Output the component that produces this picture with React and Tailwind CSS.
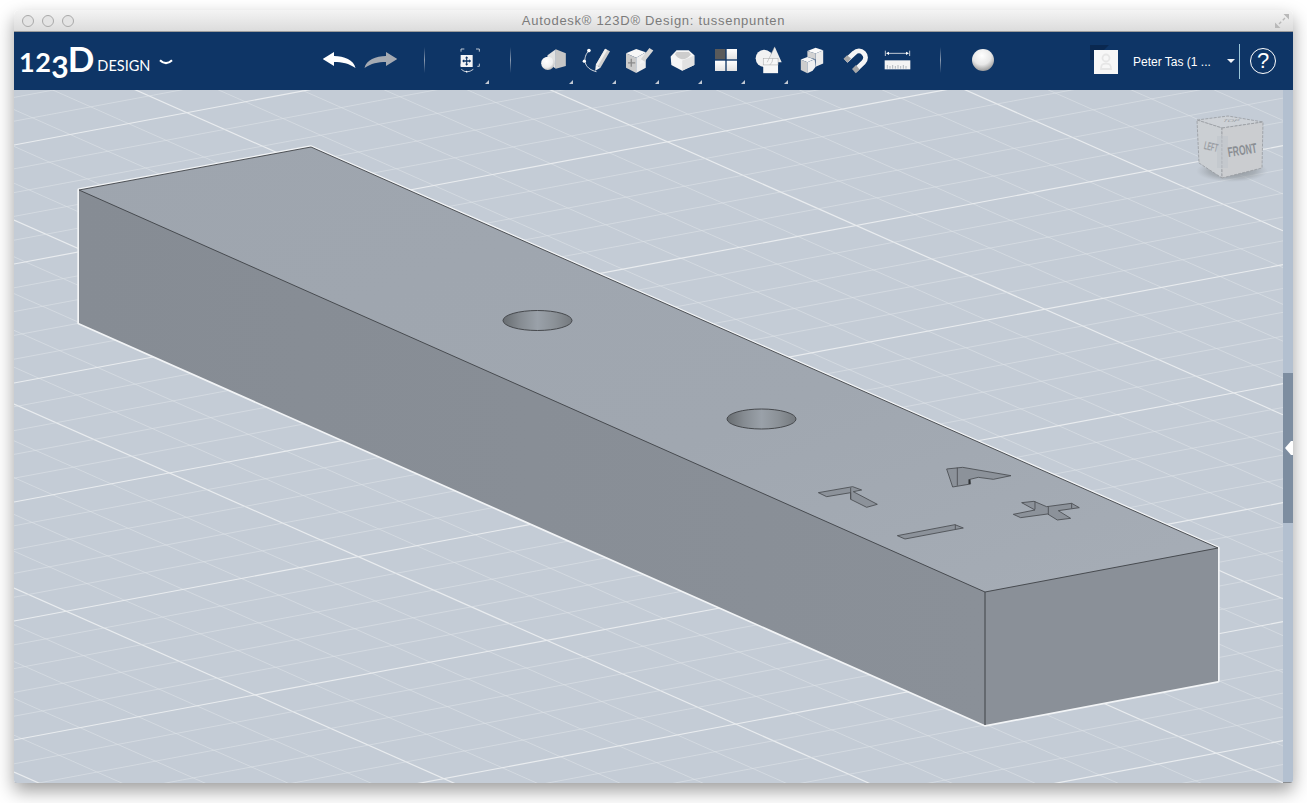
import React from 'react';

// grid lattice of the 3D floor: orthographic view, so every line in a family is parallel
const LEFT = 14;
const RIGHT = 1283;
const SPAN = RIGHT - LEFT;

function buildLines(base, step, slope, min, max) {
  const lines = [];
  for (let k = -60; k <= 60; k++) {
    const c = base + step * k;
    if (c < min || c > max) continue;
    lines.push({ id: k, y1: c, y2: c + slope * SPAN, major: k % 5 === 0 });
  }
  return lines;
}

const downLines = buildLines(588, 36.8, 0.4435, -480, 790);
const upLines = buildLines(145, 23.8, -0.187, 85, 1025);
const gridLines = [...downLines.map(l => ({ ...l, key: 'd' + l.id })), ...upLines.map(l => ({ ...l, key: 'u' + l.id }))];

function Scene() {
  return (
    <svg viewBox="14 90 1269 693" className="block w-[1269px] h-[693px] bg-[#c4ccd6]">
      <defs>
        <linearGradient id="topFace" x1="0" y1="0" x2="1" y2="1">
          <stop offset="0" stopColor="#9ea5ae" />
          <stop offset="0.6" stopColor="#a0a7b0" />
          <stop offset="1" stopColor="#a6adb6" />
        </linearGradient>
        <linearGradient id="leftFace" x1="0" y1="0" x2="1" y2="0">
          <stop offset="0" stopColor="#868c94" />
          <stop offset="1" stopColor="#8a9098" />
        </linearGradient>
        <linearGradient id="holeWall" x1="0" y1="0" x2="1" y2="0">
          <stop offset="0" stopColor="#686d71" />
          <stop offset="0.25" stopColor="#868c92" />
          <stop offset="0.5" stopColor="#9aa1a9" />
          <stop offset="0.75" stopColor="#8b9197" />
          <stop offset="1" stopColor="#74797e" />
        </linearGradient>
        <radialGradient id="cubeShadow" cx="0.5" cy="0.5" r="0.5">
          <stop offset="0" stopColor="#7d8388" stopOpacity="0.85" />
          <stop offset="0.65" stopColor="#8d9398" stopOpacity="0.5" />
          <stop offset="1" stopColor="#a0a6ad" stopOpacity="0" />
        </radialGradient>
      </defs>

      {gridLines.map(l => (
        <line
          key={l.key}
          x1={LEFT}
          y1={l.y1}
          x2={RIGHT}
          y2={l.y2}
          stroke={l.major ? '#e9ecef' : '#dde2e7'}
          strokeWidth={l.major ? 1.2 : 0.6}
        />
      ))}

      {/* block */}
      <polygon points="79,323 79,190 311,147 1218,548 1218,681 985,725" fill="#8a9098" stroke="#f2f4f6" strokeWidth="3.4" strokeLinejoin="round" />
      <polygon points="79,190 311,147 1218,548 985,592" fill="url(#topFace)" />
      <polygon points="79,190 985,592 985,725 79,323" fill="url(#leftFace)" />
      <polygon points="985,592 1218,548 1218,681 985,725" fill="#8a9098" />
      <polyline points="79,190 311,147 1218,548 985,592 79,190" fill="none" stroke="#3f4347" strokeWidth="0.9" />
      <line x1="985" y1="592" x2="985" y2="725" stroke="#3f4347" strokeWidth="1" />

      {/* holes */}
      <ellipse cx="537.5" cy="320.5" rx="34.5" ry="10" fill="url(#holeWall)" stroke="#46494d" strokeWidth="1" />
      <ellipse cx="761.5" cy="419" rx="34.5" ry="10" fill="url(#holeWall)" stroke="#46494d" strokeWidth="1" />

      {/* cut out symbols, drawn in crop coordinates */}
      <g transform="translate(780 440) scale(0.3333)" fill="#8c929a" stroke="#4a4e52" strokeWidth="2.6" strokeLinejoin="round">
        <polygon points="115,158 218,140 245,150 220,155 292,193 260,202 212,178 212,158 140,170" />
        <line x1="212" y1="143" x2="212" y2="178" />
        <polygon points="500,87 548,82 693,107 640,118 595,112 570,118 572,132 518,141" />
        <line x1="532" y1="83" x2="532" y2="137" />
        <line x1="568" y1="118" x2="568" y2="132" strokeWidth="5" stroke="#2e3134" />
        <polygon points="352,287 525,254 550,264 375,297" />
        <line x1="526" y1="254" x2="526" y2="268" />
        <polygon points="725,188 762,184 800,200 875,190 898,203 835,212 872,235 832,240 803,222 722,233 700,223 765,210" />
        <line x1="765" y1="184" x2="765" y2="208" />
        <line x1="805" y1="200" x2="805" y2="224" />
        <line x1="875" y1="190" x2="875" y2="205" />
      </g>

      {/* view cube */}
      <ellipse cx="1232" cy="171" rx="36" ry="11" fill="url(#cubeShadow)" />
      <g stroke="#979ba0" strokeWidth="0.8" strokeDasharray="3 1.2">
        <polygon points="1197,120 1228,116 1263,122 1222,128" fill="#cdd1d6" />
        <polygon points="1197,120 1222,128 1222,178 1199,163" fill="#cbcfd3" />
        <polygon points="1222,128 1263,122 1262,168 1222,178" fill="#cbcdd0" />
      </g>
      <rect x="1217" y="136" width="11" height="32" fill="#c0c5cb" opacity="0.6" />
      <text transform="translate(1203.500 149) rotate(12) scale(0.5 1.05)" fontFamily="'Liberation Sans', sans-serif" fontSize="11" fontWeight="700" fill="#9a9ea3">LEFT</text>
      <text transform="translate(1228.500 157) rotate(-9) scale(0.68 1.1)" fontFamily="'Liberation Sans', sans-serif" fontSize="12.500" fontWeight="700" fill="#8a8e93">FRONT</text>
      <text transform="translate(1222 122) skewX(-40) scale(1 0.5)" fontFamily="'Liberation Sans', sans-serif" fontSize="8" fill="#9a9ea3">TOP</text>
    </svg>
  );
}

function CornerBadge() {
  return <span className="absolute right-[2px] bottom-[6px] w-0 h-0 border-b-[4px] border-l-[4px] border-b-[#c2c9d3] border-l-transparent" />;
}

function Slot({ badge, children }) {
  return (
    <div className="relative w-[43px] h-full flex items-center justify-center shrink-0">
      <div className="-mt-[2px] flex">{children}</div>
      {badge && <CornerBadge />}
    </div>
  );
}

function ToolDivider({ className }) {
  return <div className={`w-px h-[26px] shrink-0 -mt-[2px] bg-linear-to-b from-transparent via-[#8b9bb0] to-transparent ${className}`} />;
}

function FitIcon() {
  return (
    <svg viewBox="55 45 66 84" className="w-[22px] h-[28px]">
      <g fill="none" stroke="#e8ebef" strokeWidth="2.4">
        <path d="M61 62V54H71M106 54H116V62M61 98V106M116 98V106H110" />
        <path d="M62 115Q78 130 98 115" />
      </g>
      <circle cx="78" cy="122" r="2.4" fill="#fff" />
      <rect x="60" y="72" width="36" height="36" fill="#f3f4f6" />
      <path d="M78 76l5 6h-3.400v6h6v-3.400l6 5.400-6 5.400v-3.400h-6v6H83l-5 6-5-6h3.400v-6h-6v3.400l-6-5.400 6-5.400v3.400h6v-6H73z" fill="#0e3566" />
    </svg>
  );
}

function PrimitivesIcon() {
  return (
    <svg viewBox="298 56 80 72" className="w-[27px] h-[24px]">
      <defs>
        <radialGradient id="ball" cx="0.4" cy="0.35" r="0.75">
          <stop offset="0" stopColor="#ffffff" />
          <stop offset="0.6" stopColor="#efefef" />
          <stop offset="1" stopColor="#a9a9a9" />
        </radialGradient>
      </defs>
      <polygon points="320,78 345,60 345,118 320,100" fill="#e2e2e2" />
      <polygon points="345,60 375,72 375,110 345,118" fill="#c6c6c6" />
      <circle cx="321" cy="102" r="20" fill="url(#ball)" />
    </svg>
  );
}

function SketchIcon() {
  return (
    <svg viewBox="426 48 88 80" className="w-[29px] h-[27px]">
      <path d="M447 58C428 78 428 112 470 122" fill="none" stroke="#f2f2f2" strokeWidth="2.6" />
      <circle cx="447" cy="58" r="5.500" fill="#fff" />
      <circle cx="433" cy="90" r="5" fill="#fff" />
      <polygon points="496,52 511,60 482,110 468,101" fill="#cfcfcf" />
      <polygon points="496,52 503,56 474,105 468,101" fill="#f0f0f0" />
      <polygon points="468,101 482,110 466,119" fill="#f4f4f4" />
    </svg>
  );
}

function ModifyIcon() {
  return (
    <svg viewBox="556 50 88 80" className="w-[29px] h-[27px]">
      <polygon points="559,68 590,55 619,65 590,82" fill="#f7f7f7" />
      <polygon points="559,68 590,82 590,128 559,112" fill="#cbcbcb" />
      <polygon points="590,82 619,65 619,112 590,128" fill="#ededed" />
      <path d="M575 85v24M565 97h22" stroke="#8a8a8a" strokeWidth="4" />
      <polygon points="630,52 642,60 615,94 604,86" fill="#d6d6d6" />
      <polygon points="604,86 615,94 600,101" fill="#f4f4f4" />
    </svg>
  );
}

function ShellIcon() {
  return (
    <svg viewBox="688 60 76 68" className="w-[25px] h-[23px]">
      <polygon points="690,82 708,63 745,63 762,78 762,108 725,125 692,108" fill="#f6f6f6" />
      <polygon points="725,125 762,108 762,78 750,84 725,94" fill="#e2e2e2" />
      <path d="M708 68H745L752 76Q738 92 724 90Q710 87 703 75Z" fill="#cdcdcd" />
    </svg>
  );
}

function PatternIcon() {
  return (
    <svg viewBox="822 57 66 66" className="w-[22px] h-[22px]">
      <defs>
        <linearGradient id="patTile" x1="0" y1="0" x2="0" y2="1">
          <stop offset="0" stopColor="#ffffff" />
          <stop offset="1" stopColor="#e2e2e2" />
        </linearGradient>
      </defs>
      <rect x="822" y="57" width="31" height="31" fill="#5a5a5a" />
      <rect x="857" y="57" width="31" height="31" fill="url(#patTile)" />
      <rect x="822" y="92" width="31" height="31" fill="url(#patTile)" />
      <rect x="857" y="92" width="31" height="31" fill="url(#patTile)" />
    </svg>
  );
}

function GroupIcon() {
  return (
    <svg viewBox="940 48 82 84" className="w-[27px] h-[28px]">
      <circle cx="968" cy="85" r="26" fill="#f2f2f2" />
      <polygon points="1000,50 1021,97 977,97" fill="#ededed" />
      <rect x="965" y="85" width="45" height="45" fill="#f7f7f7" />
      <g fill="none" stroke="#a8a8a8" strokeWidth="1.600">
        <rect x="965" y="85" width="45" height="20" />
        <path d="M1000 50L977 97M994 85A26 26 0 0 1 985 105" />
      </g>
    </svg>
  );
}

function CombineIcon() {
  return (
    <svg viewBox="1078 48 72 82" className="w-[24px] h-[27px]">
      <polygon points="1100,60 1125,50 1148,58 1125,68" fill="#fafafa" />
      <polygon points="1125,68 1148,58 1148,98 1125,108" fill="#ebebeb" />
      <polygon points="1100,60 1125,68 1125,85 1100,78" fill="#d2d2d2" />
      <polygon points="1080,86 1100,78 1120,85 1100,94" fill="#f7f7f7" />
      <polygon points="1080,86 1100,94 1100,128 1080,118" fill="#cdcdcd" />
      <polygon points="1100,94 1122,85 1125,108 1116,120 1100,128" fill="#f0f0f0" />
    </svg>
  );
}

function MagnetIcon() {
  return (
    <svg viewBox="1200 50 84 82" className="w-[28px] h-[27px]">
      <path d="M1214 92L1240 68A19 19 0 0 1 1268 96L1241 122" fill="none" stroke="#f5f5f5" strokeWidth="15" />
      <path d="M1207 86L1218 75L1230 85L1219 97Z" fill="#a7a7a7" />
      <path d="M1233 117L1245 105L1256 118L1244 130Z" fill="#a7a7a7" />
    </svg>
  );
}

function RulerIcon() {
  return (
    <svg viewBox="1331 60 81 60" className="w-[27px] h-[20px]">
      <path d="M1335 62V78M1408 62V78" stroke="#f0f0f0" strokeWidth="2.4" />
      <path d="M1340 70H1403" stroke="#f0f0f0" strokeWidth="2.4" />
      <path d="M1337 70l9-5v10zM1406 70l-9-5v10z" fill="#fff" />
      <rect x="1333" y="91" width="77" height="27" fill="#f4f4f4" />
      <path d="M1341 105v11M1349 108v8M1357 105v11M1365 108v8M1373 105v11M1381 108v8M1389 105v11M1397 108v8" stroke="#76808c" strokeWidth="1.600" />
    </svg>
  );
}

function Logo() {
  return (
    <div className="ml-[5px] w-[155px] shrink-0 flex items-start h-[40px] -mt-[2px] text-white font-['Lato',sans-serif]">
      <span className="mt-[8px] text-[27px] leading-[28px] font-bold tracking-[0.5px]">12</span>
      <span className="mt-[9px] text-[30px] leading-[34px] font-bold">3</span>
      <span className="mt-[-1px] text-[35px] leading-[38px] font-bold -ml-[1px]">D</span>
      <span className="mt-[16px] ml-[3px] text-[14.5px] leading-[20px] font-normal">DESIGN</span>
      <svg viewBox="0 0 14 7" className="mt-[19px] ml-[9px] w-[14px] h-[7px] shrink-0">
        <path d="M1 1.200Q7 7 13 1.200" fill="none" stroke="#fff" strokeWidth="2.200" />
      </svg>
    </div>
  );
}

function Toolbar() {
  return (
    <div className="h-[58px] bg-[#0e3566] flex items-center shrink-0">
      <Logo />
      <svg viewBox="0 0 34 18" className="ml-[148px] w-[34px] h-[18px] shrink-0 -mt-[3px]">
        <path d="M0.7 8L12 1V5C22 5 32 9 33.500 17C27 12.500 20 11 12 11V15Z" fill="#ffffff" />
      </svg>
      <svg viewBox="0 0 34 18" className="ml-[8px] w-[34px] h-[18px] shrink-0 -mt-[3px]">
        <path d="M33.300 8L22 1V5C12 5 2 9 0.5 17C7 12.500 14 11 22 11V15Z" fill="#a5aab2" />
      </svg>
      <ToolDivider className="ml-[26px]" />
      <div className="ml-[23px] h-full shrink-0">
        <Slot badge><FitIcon /></Slot>
      </div>
      <ToolDivider className="ml-[19px]" />
      <div className="ml-[21px] h-full flex shrink-0">
        <Slot badge><PrimitivesIcon /></Slot>
        <Slot badge><SketchIcon /></Slot>
        <Slot badge><ModifyIcon /></Slot>
        <Slot badge><ShellIcon /></Slot>
        <Slot badge><PatternIcon /></Slot>
        <Slot badge><GroupIcon /></Slot>
        <Slot><CombineIcon /></Slot>
        <Slot><MagnetIcon /></Slot>
        <Slot><RulerIcon /></Slot>
      </div>
      <ToolDivider className="ml-[21px]" />
      <svg viewBox="0 0 24 24" className="ml-[30px] w-[24px] h-[24px] shrink-0 -mt-[2px]">
        <defs>
          <radialGradient id="matBall" cx="0.45" cy="0.3" r="0.75">
            <stop offset="0" stopColor="#ffffff" />
            <stop offset="0.55" stopColor="#e8e8e8" />
            <stop offset="1" stopColor="#8e8e8e" />
          </radialGradient>
        </defs>
        <circle cx="12" cy="12" r="11" fill="url(#matBall)" />
      </svg>
      <svg viewBox="0 0 28 29" className="ml-[95px] w-[28px] h-[29px] shrink-0 -mt-[3px]">
        <polygon points="0,0 19,0 4,15 0,15" fill="#0a2850" />
        <rect x="4" y="5" width="24" height="24" fill="#f7f7f7" />
        <g fill="none" stroke="#e6e6e6" strokeWidth="1.800">
          <circle cx="16" cy="13" r="3.500" />
          <path d="M11 24C11 19 13 18.500 16 18.500S21 19 21 24Z" />
        </g>
      </svg>
      <span className="ml-[15px] mt-[1px] w-[79px] shrink-0 whitespace-nowrap text-white text-[12px] leading-[16px] font-['Liberation_Sans',sans-serif]">Peter Tas (1 ...</span>
      <span className="ml-[15px] shrink-0 w-0 h-0 border-t-[4px] border-x-[4px] border-t-[#f2f4f7] border-x-transparent" />
      <div className="ml-[4px] w-px h-[35px] bg-[#9cc7d9] shrink-0" />
      <div className="ml-[10px] w-[26px] h-[26px] rounded-full border border-white flex items-center justify-center text-white text-[22px] leading-none shrink-0 font-['Liberation_Sans',sans-serif]">?</div>
    </div>
  );
}

function TitleBar() {
  return (
    <div className="h-[22px] flex items-center shrink-0 rounded-t-[5px] bg-linear-to-b from-[#f4f4f4] to-[#dcdcdc] border-b border-[#9c9c9c]">
      <div className="w-[64px] pl-[8px] flex gap-[8px] shrink-0">
        <span className="w-[12px] h-[12px] rounded-full border border-[#a9a9a9] bg-[#e4e4e4]" />
        <span className="w-[12px] h-[12px] rounded-full border border-[#a9a9a9] bg-[#e4e4e4]" />
        <span className="w-[12px] h-[12px] rounded-full border border-[#a9a9a9] bg-[#e4e4e4]" />
      </div>
      <div className="flex-1 text-center text-[13px] leading-[16px] tracking-[0.72px] text-[#7b7b7b] font-['Liberation_Sans',sans-serif] whitespace-nowrap">
        Autodesk® 123D® Design: tussenpunten
      </div>
      <div className="w-[64px] pr-[4px] flex justify-end shrink-0">
        <svg viewBox="0 0 14 14" className="w-[14px] h-[14px]">
          <path d="M14 0H8.500L14 5.500ZM0 14H5.500L0 8.500Z" fill="#b9b9b9" />
          <path d="M10 4L7.800 6.200M4 10L6.200 7.800" stroke="#b9b9b9" strokeWidth="1.400" />
        </svg>
      </div>
    </div>
  );
}

function SidePanelStrip() {
  return (
    <div className="w-[10px] h-full flex flex-col shrink-0 bg-[#b3c0d0]">
      <div className="h-[283px]" />
      <div className="h-[150px] bg-[#7d8da0] flex items-center justify-end">
        <svg viewBox="0 0 8 14" className="w-[8px] h-[14px]">
          <path d="M0 7L6 0H8V14H6Z" fill="#ffffff" />
        </svg>
      </div>
    </div>
  );
}

export default function App() {
  return (
    <div className="w-[1307px] h-[803px] bg-white pl-[14px] pt-[10px] overflow-hidden">
      <div className="w-[1279px] h-[773px] flex flex-col rounded-t-[5px] rounded-b-[3px] overflow-hidden shadow-[0_8px_18px_rgba(0,0,0,0.38)]">
        <TitleBar />
        <Toolbar />
        <div className="flex h-[693px] border-b border-[#8a8d91]">
          <Scene />
          <SidePanelStrip />
        </div>
      </div>
    </div>
  );
}
